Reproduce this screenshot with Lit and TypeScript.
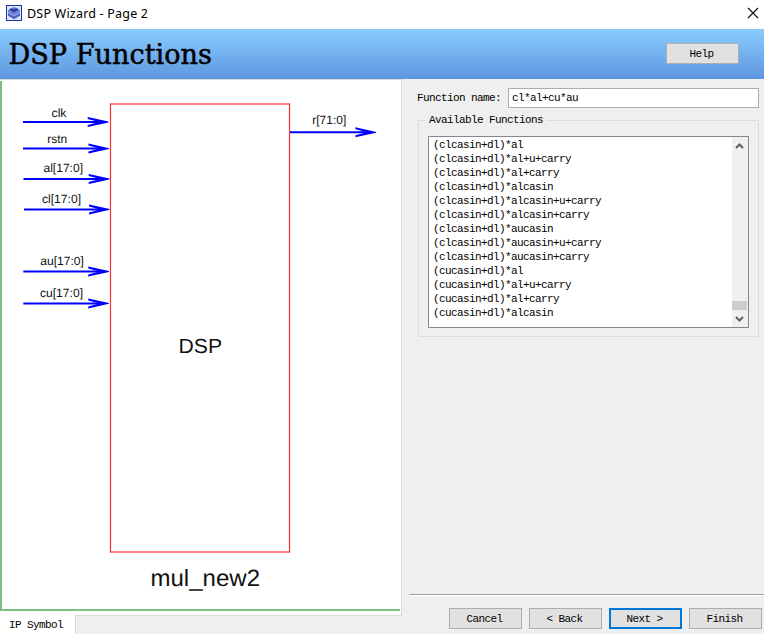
import { LitElement, html, svg, css } from "lit";
import { customElement, state } from "lit/decorators.js";

interface Port {
  name: string;
  x: number;
  y: number;
  tx: number;
  ty: number;
  w: number;
  end: number;
}

const PORTS: Port[] = [
  { name: "clk", x: 23, y: 122, tx: 51.5, ty: 117, w: 15, end: 107 },
  { name: "rstn", x: 23, y: 148.6, tx: 47.3, ty: 143, w: 20, end: 107.7 },
  { name: "al[17:0]", x: 23.5, y: 179, tx: 43.5, ty: 172.3, w: 39.5, end: 108 },
  { name: "cl[17:0]", x: 24, y: 209.4, tx: 42, ty: 202.5, w: 39, end: 108.3 },
  { name: "au[17:0]", x: 23.3, y: 271.5, tx: 40.3, ty: 264.5, w: 43.5, end: 107.5 },
  { name: "cu[17:0]", x: 23.3, y: 303.4, tx: 40, ty: 296.8, w: 43, end: 107.5 },
  { name: "r[71:0]", x: 290, y: 132.3, tx: 312.3, ty: 124.3, w: 34, end: 374.7 },
];

const FUNCTIONS = [
  "(clcasin+dl)*al",
  "(clcasin+dl)*al+u+carry",
  "(clcasin+dl)*al+carry",
  "(clcasin+dl)*alcasin",
  "(clcasin+dl)*alcasin+u+carry",
  "(clcasin+dl)*alcasin+carry",
  "(clcasin+dl)*aucasin",
  "(clcasin+dl)*aucasin+u+carry",
  "(clcasin+dl)*aucasin+carry",
  "(cucasin+dl)*al",
  "(cucasin+dl)*al+u+carry",
  "(cucasin+dl)*al+carry",
  "(cucasin+dl)*alcasin",
];

@customElement("dsp-symbol")
export class DspSymbol extends LitElement {
  static styles = css`
    :host { display: block; width: 401px; height: 535px; letter-spacing: 0; }
    .canvas { display: block; }
    .label { font-family: "Liberation Sans", Arial, sans-serif; fill: #111; text-rendering: geometricPrecision; }
    .box { fill: none; stroke: #ff3030; stroke-width: 1.2; }
    .wire { stroke: #0000ff; stroke-width: 2; fill: none; }
    .head { fill: #0000ff; }
    .frame { stroke: #7fbf7f; stroke-width: 2; fill: none; }
  `;

  private port(p: Port) {
    const e = p.end;
    return svg`
      <path class="wire" d="M${p.x} ${p.y}H${e - 4}" />
      <path class="head" d="M${e + 1.5} ${p.y - 0.4}V${p.y + 0.4}L${e - 19.3} ${p.y + 5}V${p.y + 3}L${e - 8} ${p.y}L${e - 19.3} ${p.y - 3}V${p.y - 5}Z" />
      <text class="label" x=${p.tx} y=${p.ty} font-size="12" textLength=${p.w} lengthAdjust="spacingAndGlyphs">${p.name}</text>`;
  }

  render() {
    return html`<svg class="canvas" width="401" height="535" viewBox="0 80 401 535">
      <path class="frame" d="M1 81V610H400" />
      <rect class="box" x="110.5" y="104" width="179" height="448" />
      ${PORTS.map((p) => this.port(p))}
      <text class="label" x="178.5" y="353" font-size="20.5" textLength="43.5" lengthAdjust="spacingAndGlyphs">DSP</text>
      <text class="label" x="150.5" y="586" font-size="23.5" textLength="109.5" lengthAdjust="spacingAndGlyphs">mul_new2</text>
    </svg>`;
  }
}

@customElement("app-root")
export class AppRoot extends LitElement {
  static styles = css`
    :host {
      display: flex; flex-direction: column; width: 764px; height: 634px;
      overflow: hidden; background: #efefef; color: #000;
      font: 11px/14px "Liberation Mono", "Courier New", monospace;
      letter-spacing: -0.6px;
    }
    * { box-sizing: border-box; }
    .titlebar { display: flex; flex: none; height: 29px; background: #fff; padding: 5px 5px 0 6px; }
    .caption { font-family: "Noto Sans", sans-serif; letter-spacing: 0; }
    .spacer { flex: 1; }
    .banner {
      display: flex; flex: none; height: 50px; padding-right: 25px;
      background: linear-gradient(#89ccff, #5e96df);
    }
    .heading { font-family: "DejaVu Serif", serif; letter-spacing: 0; stroke: #000; stroke-width: 0.5px; }
    .btn {
      width: 73px; height: 21px; margin: 0; padding: 0 2px 0 0; border: 1px solid #adadad;
      background: #e1e1e1; color: #000; font: inherit; letter-spacing: inherit; white-space: pre;
      border-radius: 0;
    }
    .btn.primary { border: 2px solid #0078d7; }
    .banner .btn { margin-top: 14px; }
    .body { display: flex; flex: 1; }
    .left { display: flex; flex-direction: column; width: 402px; }
    .sheet { height: 537px; background: #fff; border-top: 1px solid #d9d9d9; border-right: 1px solid #d9d9d9; }
    .tabs { display: flex; flex: 1; }
    .tab { width: 75px; background: #fff; padding: 2px 0 0 9px; white-space: pre; }
    .tabrest { flex: 1; border-top: 1px solid #d9d9d9; border-left: 1px solid #d9d9d9; margin-top: -1px; }
    .right { display: flex; flex-direction: column; flex: 1; padding: 9px 0 0 7px; }
    .row { display: flex; align-items: center; height: 20px; padding: 0 5px 0 8px; }
    .name { width: 91px; white-space: pre; }
    .field {
      width: 251px; height: 20px; margin: 0; padding: 0 0 0 3px; border: 1px solid #abadb3; border-radius: 0;
      background: #fff; font: inherit; letter-spacing: inherit; color: #000; outline: none;
    }
    .group {
      width: 341px; height: 224px; margin: 5px 0 0 9px; padding: 0 9px 8px; border: 0;
      display: flex; flex-direction: column;
      background: linear-gradient(#dcdcdc, #dcdcdc) 0 7px / 100% 1px no-repeat,
        linear-gradient(#dcdcdc, #dcdcdc) 0 100% / 100% 1px no-repeat,
        linear-gradient(#dcdcdc, #dcdcdc) 0 7px / 1px 100% no-repeat,
        linear-gradient(#dcdcdc, #dcdcdc) 100% 7px / 1px 100% no-repeat;
    }
    .legend { align-self: flex-start; margin-left: -2px; padding: 0 3px 0 4px; height: 23px; background: #efefef; }
    .list { display: flex; margin-left: 1px; width: 321px; height: 192px; border: 1px solid #828790; background: #fff; }
    .items { flex: 1; padding: 1px 0 0 4px; }
    .item { height: 14px; }
    .scroll { display: flex; flex-direction: column; width: 16px; background: #f0f0f0; }
    .thumb { width: 15px; height: 9px; background: #cdcdcd; margin-top: 147px; }
    .arrow { display: block; }
    .footer { margin-top: 257px; border-top: 1px solid #a0a0a0; height: 2px; background: #fff; flex: none; }
    .actions { display: flex; gap: 7px; margin: 12px 0 0 40px; }
  `;

  @state() private functionName = "cl*al+cu*au";

  render() {
    return html`
      <div class="titlebar">
        <svg width="16" height="16" viewBox="0 0 16 16">
          <rect x=".5" y=".5" width="15" height="15" fill="#dfe5f7" stroke="#1238ae" />
          <path d="M2 5.2L4.5 3.3L8 2L11.5 3.3L14 5.2V10.7L8 14.2L2 10.7Z" fill="#7483d6" />
          <path d="M3.5 5L5 3.5H6.5L8 4.3L9.5 3.5H11L12.5 5L8 7.5Z" fill="#2e419d" />
          <path d="M2 8L8 11.2L14 8V10.5L8 14L2 10.5Z" fill="#5063bd" />
          <path d="M2 7.7L8 11L14 7.7" fill="none" stroke="#a9b4ee" stroke-width=".7" />
        </svg>
        <svg width="130" height="20">
          <text class="caption" x="5" y="12.5" font-size="12.5" textLength="121">DSP Wizard - Page 2</text>
        </svg>
        <span class="spacer"></span>
        <svg width="12" height="16">
          <path d="M1 3L11 13M11 3L1 13" stroke="#111" stroke-width="1.15" />
        </svg>
      </div>
      <div class="banner">
        <svg width="230" height="50">
          <text class="heading" x="8.5" y="35" font-size="27" textLength="203.5" lengthAdjust="spacingAndGlyphs">DSP Functions</text>
        </svg>
        <span class="spacer"></span>
        <button class="btn">Help</button>
      </div>
      <div class="body">
        <div class="left">
          <div class="sheet"><dsp-symbol></dsp-symbol></div>
          <div class="tabs"><div class="tab">IP Symbol</div><div class="tabrest"></div></div>
        </div>
        <div class="right">
          <div class="row">
            <span class="name">Function name:</span>
            <input class="field" .value=${this.functionName} />
          </div>
          <div class="group">
            <div class="legend">Available Functions</div>
            <div class="list">
              <div class="items">${FUNCTIONS.map((f) => html`<div class="item">${f}</div>`)}</div>
              <div class="scroll">
                <svg class="arrow" width="16" height="17"><path d="M4 11L7.5 7.5L11 11" fill="none" stroke="#606060" stroke-width="2" /></svg>
                <div class="thumb"></div>
                <svg class="arrow" width="16" height="17"><path d="M4 7L7.5 10.5L11 7" fill="none" stroke="#606060" stroke-width="2" /></svg>
              </div>
            </div>
          </div>
          <div class="footer"></div>
          <div class="actions">
            <button class="btn">Cancel</button>
            <button class="btn">&lt; Back</button>
            <button class="btn primary">Next &gt;</button>
            <button class="btn">Finish</button>
          </div>
        </div>
      </div>
    `;
  }
}
